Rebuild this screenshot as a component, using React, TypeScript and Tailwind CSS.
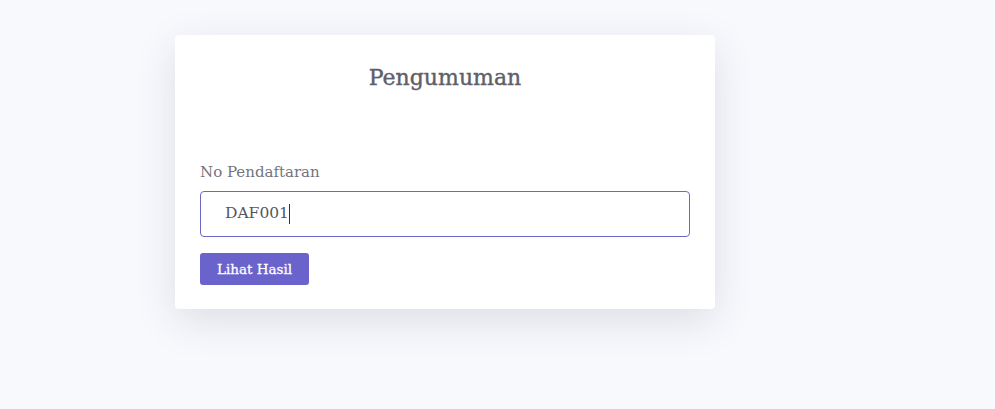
import React, { useState } from 'react';

const App = () => {
  const [noDaftar, setNoDaftar] = useState('DAF001');

  return (
    <div className="min-h-screen w-full bg-[#f8f9fd] pt-[35px] pl-[175px] font-['DejaVu_Serif',serif]">
      <div className="w-[540px] rounded-[4px] bg-white px-[25px] pt-[26px] pb-[24px] shadow-[0_12px_40px_rgba(40,45,80,0.13)]">
        <h2 className="text-center text-[22px] leading-[34px] text-[#5f5f6b] [-webkit-text-stroke:0.4px_#5f5f6b]">Pengumuman</h2>

        <div className="mt-[66px]">
          <label className="block text-[15px] leading-[22px] text-[#74747e]">No Pendaftaran</label>
          <div className="mt-[8px] flex h-[46px] items-center rounded-[4px] border border-[#6e68c4] pl-[24px]">
            <span className="text-[15.5px] text-[#55555f]">{noDaftar}</span>
            <span className="h-[20px] w-px bg-[#333]" />
          </div>
          <button
            onClick={() => setNoDaftar(noDaftar)}
            className="mt-[16px] h-[32px] rounded-[3px] bg-[#6a63cc] px-[17px] text-[13.5px] text-white [-webkit-text-stroke:0.3px_white]"
          >
            Lihat Hasil
          </button>
        </div>
      </div>
    </div>
  );
};

export default App;
